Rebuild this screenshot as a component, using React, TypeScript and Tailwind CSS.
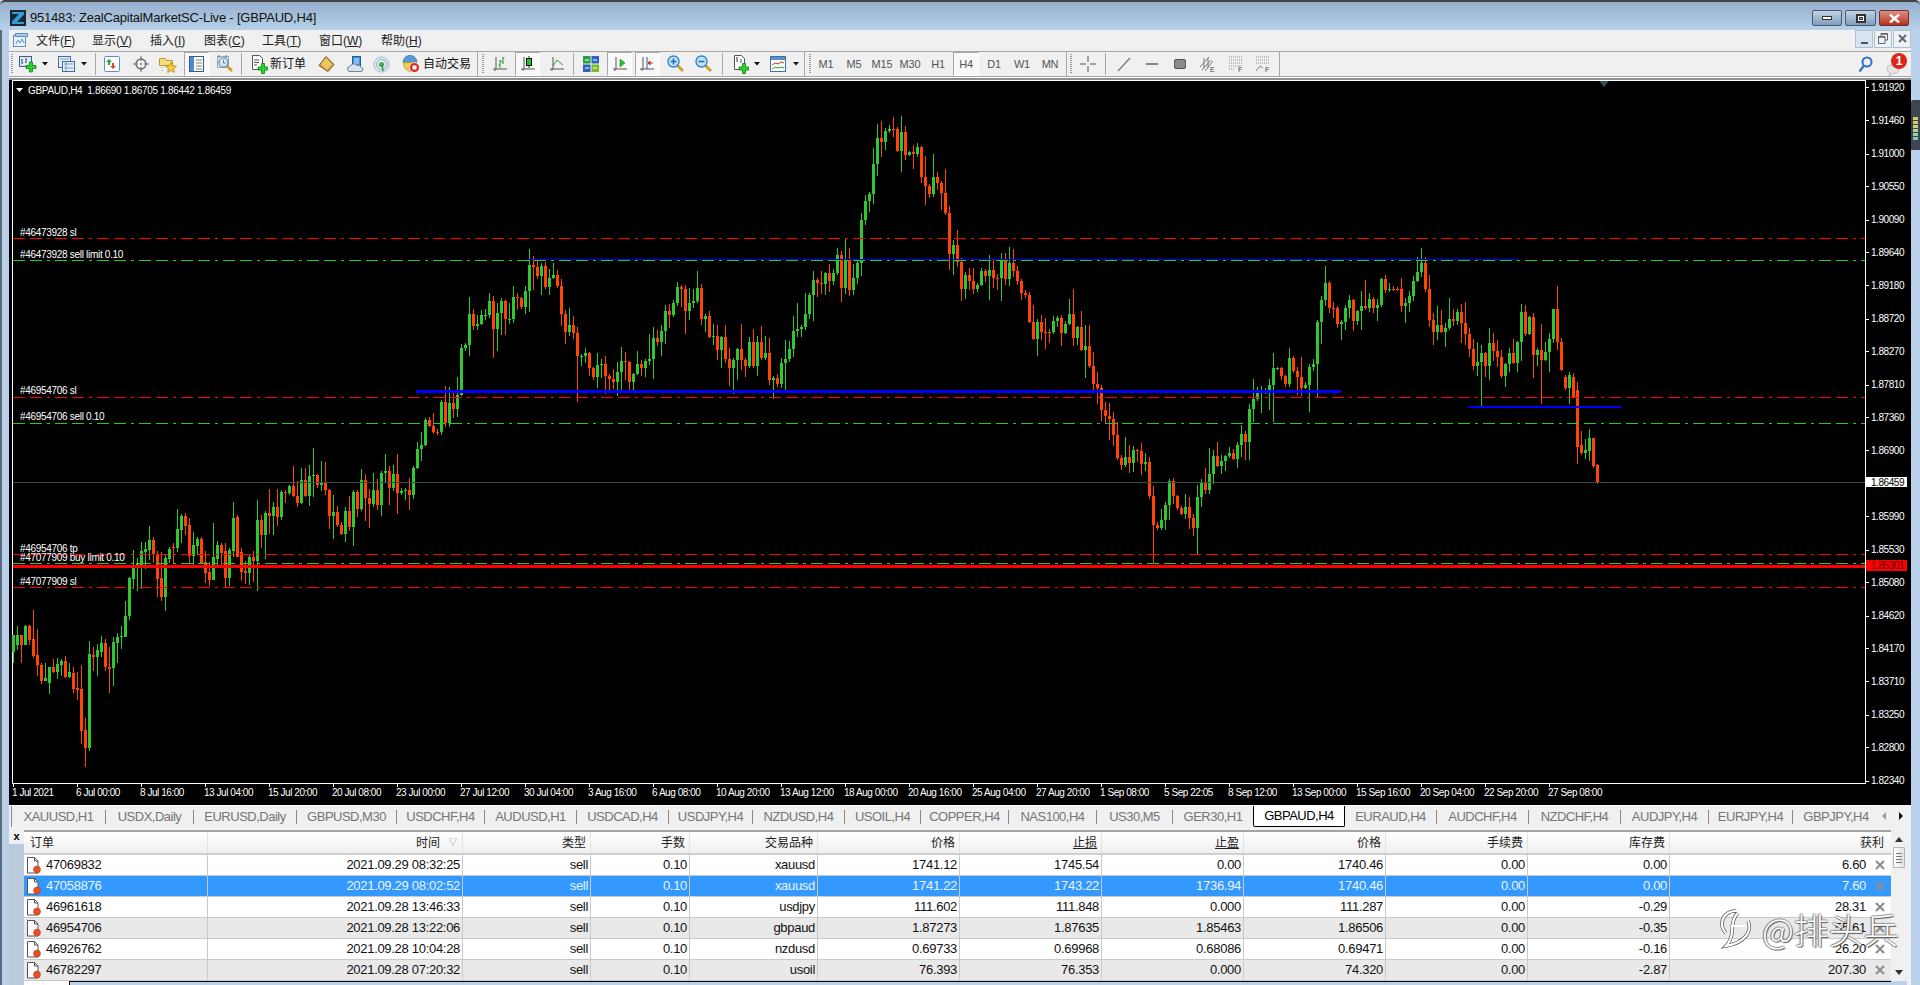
import React from 'react';

// real-pixel chart helpers
const priceY = (p: number) => 87 + (1.9192 - p) * 7241;

type C = [number, number, number, number, number];
// first candles, read off the picture: [green?, bodyTop, bodyBottom, wickTop, wickBottom] (3x, y offset 500)
const headRaw: C[] = [
  [1, 405, 455, 405, 490], [1, 405, 435, 378, 450], [0, 405, 435, 405, 488], [1, 378, 435, 375, 435], [0, 378, 420, 375, 435],
  [0, 418, 468, 330, 475], [0, 465, 495, 388, 528], [0, 495, 543, 490, 552], [1, 533, 543, 490, 543], [1, 502, 548, 500, 582],
  [0, 502, 516, 478, 518], [1, 492, 516, 475, 537], [1, 484, 495, 478, 528], [0, 484, 532, 468, 535], [1, 516, 530, 490, 535],
  [0, 520, 567, 502, 578], [0, 565, 570, 516, 600], [0, 567, 692, 495, 732], [0, 690, 744, 655, 800], [1, 462, 745, 424, 752],
  [0, 465, 470, 442, 513], [1, 450, 472, 432, 528], [1, 430, 455, 408, 470], [0, 428, 500, 418, 512], [0, 500, 506, 440, 578],
  [1, 426, 503, 410, 558], [1, 412, 428, 400, 488], [1, 408, 410, 378, 448], [1, 348, 410, 303, 412], [1, 233, 348, 230, 360],
  [1, 204, 236, 150, 268], [1, 190, 204, 175, 272], [1, 152, 198, 125, 266], [1, 148, 156, 126, 206], [1, 120, 150, 78, 180],
  [0, 120, 162, 112, 190], [0, 162, 237, 152, 290], [0, 234, 290, 155, 302], [1, 175, 291, 165, 332], [1, 146, 177, 140, 190],
  [0, 140, 143, 128, 190], [1, 87, 145, 27, 155], [1, 47, 90, 42, 130], [0, 47, 78, 38, 105], [0, 76, 167, 55, 190],
  [1, 136, 167, 95, 204], [1, 116, 138, 112, 165], [0, 116, 190, 112, 192], [0, 186, 220, 153, 250], [0, 216, 240, 185, 258],
  [1, 172, 240, 68, 240], [1, 135, 178, 122, 200], [0, 135, 160, 130, 205], [0, 152, 234, 130, 260], [1, 150, 234, 145, 258],
  [1, 54, 154, 6, 172], [0, 52, 170, 45, 172], [0, 156, 215, 145, 243], [0, 213, 218, 183, 252], [1, 172, 218, 165, 255],
  [0, 172, 182, 153, 245], [1, 60, 183, 0, 272],
];
const tailRaw: C[] = [
  [0, -10, 25, -15, 30], [1, -15, 25, -25, 72], [0, -8, 50, -20, 55], [0, 30, 200, 5, 252], [0, 195, 219, 153, 225],
  [1, 210, 219, 178, 237], [1, 174, 213, 148, 243], [0, 174, 258, 174, 264], [0, 255, 310, 252, 312],
];
// mid price path in the coordinates of a 1568 wide view
const path: [number, number][] = [
  [212, 425], [225, 420], [235, 405], [250, 395], [265, 405], [280, 425], [295, 405], [310, 400], [320, 395], [330, 400], [340, 380], [350, 345],
  [360, 340], [370, 335], [378, 280], [385, 262], [395, 245], [405, 260], [415, 255], [425, 255], [433, 215], [445, 225], [455, 240], [462, 270],
  [472, 290], [485, 300], [495, 305], [505, 300], [520, 300], [530, 280], [545, 255], [555, 245], [570, 245], [580, 265], [590, 285], [600, 295],
  [612, 285], [625, 300], [640, 305], [650, 275], [665, 235], [680, 220], [695, 225], [705, 180], [715, 125], [725, 115], [737, 110], [750, 135],
  [760, 150], [770, 170], [778, 210], [785, 240], [795, 225], [810, 230], [820, 220], [835, 235], [845, 270], [855, 285], [865, 260], [875, 260],
  [885, 290], [895, 320], [905, 350], [915, 375], [925, 375], [935, 365], [942, 425], [955, 405], [965, 420], [977, 420], [985, 385], [1000, 385],
  [1015, 360], [1025, 325], [1040, 310], [1055, 300], [1070, 310], [1080, 240], [1095, 255], [1110, 260], [1125, 240], [1140, 240], [1150, 245],
  [1160, 218], [1165, 240], [1175, 285], [1190, 250], [1200, 290], [1215, 290], [1230, 300], [1245, 260], [1258, 300], [1268, 260], [1278, 312],
];
const spikes: [number, number, number][] = [
  [735, 95, 0], [433, 203, 0], [942, 0, 461], [977, 0, 453], [1158, 210, 0], [1268, 252, 0], [470, 0, 328], [600, 0, 322], [495, 0, 322],
  [640, 0, 320], [515, 0, 320], [1040, 0, 345], [1075, 0, 325], [255, 366, 0], [1210, 0, 333], [1258, 0, 330],
];

function buildCandles() {
  let s = 12345;
  const rnd = () => {
    s = (s + 0x6d2b79f5) | 0;
    let t = Math.imul(s ^ (s >>> 15), 1 | s);
    t = (t + Math.imul(t ^ (t >>> 7), 61 | t)) ^ t;
    return ((t ^ (t >>> 14)) >>> 0) / 4294967296;
  };
  const out: { x: number; up: boolean; top: number; bot: number; hi: number; lo: number }[] = [];
  headRaw.forEach((c, i) => {
    const f = (v: number) => 500 + v / 3;
    out.push({ x: 13 + 4 * i, up: !!c[0], top: f(c[1]), bot: f(c[2]), hi: f(c[3]), lo: f(c[4]) });
  });
  let prev = out[out.length - 1].top;
  const target = (x: number) => {
    const v = x / 1.2245;
    for (let k = 0; k < path.length - 1; k++) {
      if (v >= path[k][0] && v <= path[k + 1][0]) {
        const r = (v - path[k][0]) / (path[k + 1][0] - path[k][0]);
        return (path[k][1] + (path[k + 1][1] - path[k][1]) * r) * 1.2245;
      }
    }
    return path[path.length - 1][1] * 1.2245;
  };
  for (let i = headRaw.length; i < 388; i++) {
    const x = 13 + 4 * i;
    const close = target(x) + (rnd() - 0.5) * 32;
    const top = Math.min(prev, close);
    const bot = Math.max(prev, close);
    out.push({
      x,
      up: close < prev,
      top,
      bot: Math.max(bot, top + 1),
      hi: top - rnd() * rnd() * 28 - 1,
      lo: bot + rnd() * rnd() * 28 + 1,
    });
    prev = close;
  }
  tailRaw.forEach((c, i) => {
    const f = (v: number) => 380 + v / 3;
    out.push({ x: 13 + 4 * (388 + i), up: !!c[0], top: f(c[1]), bot: f(c[2]), hi: f(c[3]), lo: f(c[4]) });
  });
  spikes.forEach(([v, hi, lo]) => {
    const i = Math.round((v * 1.2245 - 13) / 4);
    if (!out[i]) return;
    if (hi) out[i].hi = hi * 1.2245;
    if (lo) out[i].lo = lo * 1.2245;
  });
  return out;
}
const candles = buildCandles();

const axisPrices = [
  '1.91920', '1.91460', '1.91000', '1.90550', '1.90090', '1.89640', '1.89180', '1.88720', '1.88270', '1.87810', '1.87360',
  '1.86900', '1.85990', '1.85530', '1.85080', '1.84620', '1.84170', '1.83710', '1.83250', '1.82800', '1.82340',
];
const axisDates = [
  '1 Jul 2021', '6 Jul 00:00', '8 Jul 16:00', '13 Jul 04:00', '15 Jul 20:00', '20 Jul 08:00', '23 Jul 00:00', '27 Jul 12:00', '30 Jul 04:00',
  '3 Aug 16:00', '6 Aug 08:00', '10 Aug 20:00', '13 Aug 12:00', '18 Aug 00:00', '20 Aug 16:00', '25 Aug 04:00', '27 Aug 20:00', '1 Sep 08:00',
  '5 Sep 22:05', '8 Sep 12:00', '13 Sep 00:00', '15 Sep 16:00', '20 Sep 04:00', '22 Sep 20:00', '27 Sep 08:00',
];
const levelLines = [
  { y: 238, color: '#ff0000' },
  { y: 260, color: '#22cc22' },
  { y: 397, color: '#ff0000' },
  { y: 423, color: '#22cc22' },
  { y: 554, color: '#ff0000' },
  { y: 563, color: '#22cc22' },
  { y: 587, color: '#ff0000' },
];
const orderLabels = [
  { y: 236, t: '#46473928 sl' },
  { y: 258, t: '#46473928 sell limit 0.10' },
  { y: 394, t: '#46954706 sl' },
  { y: 420, t: '#46954706 sell 0.10' },
  { y: 552, t: '#46954706 tp' },
  { y: 561, t: '#47077909 buy limit 0.10' },
  { y: 585, t: '#47077909 sl' },
];

const Chart = () => (
  <svg viewBox="9 80 1902 725" width={1902} height={725} className="block bg-black">
    <rect x={12.5} y={80.5} width={1853} height={703} fill="none" stroke="#fff" />
    <g shapeRendering="crispEdges">
      {candles.map((c) => (
        <g key={c.x} fill={c.up ? '#2fc92f' : '#ff4500'}>
          <rect x={c.x} y={c.hi} width={1} height={Math.max(c.lo - c.hi, 1)} />
          <rect x={c.x - 1} y={c.top} width={3} height={Math.max(c.bot - c.top, 1)} />
        </g>
      ))}
      <rect x={13} y={482} width={1852} height={1} fill="#2f4f4f" />
      {levelLines.map((l) => (
        <line key={l.y} x1={13} x2={1865} y1={l.y + 0.5} y2={l.y + 0.5} stroke={l.color} strokeDasharray="12 5 12 5 3 5" />
      ))}
      <rect x={527} y={259} width={991} height={1} fill="#0000ff" />
      <rect x={416} y={390} width={925} height={3} fill="#0000ff" />
      <rect x={1469} y={406} width={152} height={2} fill="#0000ff" />
      <rect x={13} y={565} width={1852} height={3} fill="#ff0000" />
      {axisPrices.map((p) => (
        <rect key={p} x={1865} y={Math.round(priceY(parseFloat(p)))} width={4} height={1} fill="#fff" />
      ))}
      {axisDates.map((d, i) => (
        <rect key={d} x={13 + 64 * i} y={783} width={1} height={4} fill="#fff" />
      ))}
    </g>
    <polygon points="1599,81 1609,81 1604,87" fill="#2f4f4f" />
    <polygon points="16,88 23,88 19.5,92" fill="#fff" />
    <g fill="#fff" fontSize={10} letterSpacing={-0.3}>
      <text x={28} y={94}>GBPAUD,H4&#160;&#160;1.86690 1.86705 1.86442 1.86459</text>
      {orderLabels.map((l) => (
        <text key={l.t} x={20} y={l.y}>{l.t}</text>
      ))}
    </g>
    <g fill="#fff" fontSize={10} letterSpacing={-0.45}>
      {axisPrices.map((p) => (
        <text key={p} x={1871} y={priceY(parseFloat(p)) + 3.5}>{p}</text>
      ))}
      {axisDates.map((d, i) => (
        <text key={d} x={12 + 64 * i} y={796}>{d}</text>
      ))}
    </g>
    <rect x={1866} y={477} width={41} height={10} fill="#fff" />
    <text x={1871} y={486} fontSize={10} letterSpacing={-0.45} fill="#000">1.86459</text>
    <rect x={1866} y={560} width={41} height={11} fill="#ff0000" />
    <text x={1871} y={569} fontSize={10} letterSpacing={-0.45} fill="#5a0000">1.85301</text>
  </svg>
);

/* ---------- toolbar icons ---------- */
const Plus = ({ x, y }: { x: number; y: number }) => (
  <path
    transform={`translate(${x} ${y})`}
    d="M3.5 0h3v3.5H10v3H6.5V10h-3V6.5H0v-3h3.5z"
    fill="#2bd32b"
    stroke="#0c7d1a"
    strokeWidth="0.8"
  />
);
const Axes = () => (
  <path d="M3 1v12M0 13h14M2 13v2" stroke="#555" strokeWidth="1" fill="none" />
);
const Svg = ({ w, h, cls, children }: { w: number; h: number; cls: string; children: React.ReactNode }) => (
  <svg width={w} height={h} viewBox={`0 0 ${w} ${h}`} className={`block shrink-0 ${cls}`}>
    {children}
  </svg>
);
const Arrow = ({ cls }: { cls: string }) => (
  <svg width={6} height={4} viewBox="0 0 6 4" className={`block shrink-0 ${cls}`}>
    <path d="M0 0h6L3 3.5z" fill="#111" />
  </svg>
);
const Sep = ({ cls }: { cls: string }) => <div className={`h-[22px] w-px shrink-0 bg-[#a8a8a8] ${cls}`} />;
const Grip = ({ cls }: { cls: string }) => (
  <div className={`h-[20px] w-[2px] shrink-0 border-y-0 bg-[repeating-linear-gradient(to_bottom,#9a9a9a_0,#9a9a9a_1px,transparent_1px,transparent_2px)] ${cls}`} />
);
const Pressed = ({ cls, children }: { cls: string; children: React.ReactNode }) => (
  <div className={`flex h-[24px] w-[25px] shrink-0 items-center justify-center border border-t-[#a9a9a9] border-l-[#a9a9a9] border-r-white border-b-white bg-[#f8f8f8] ${cls}`}>
    {children}
  </div>
);
const Zoom = ({ cls, plus }: { cls: string; plus: boolean }) => (
  <Svg w={17} h={18} cls={cls}>
    <path d="M10 10l6 6" stroke="#c9a227" strokeWidth="3" />
    <circle cx="6.5" cy="6.5" r="5.5" fill="#bfe3fb" stroke="#2f86c9" strokeWidth="1.4" />
    <path d={plus ? 'M3.5 6.5h6M6.5 3.5v6' : 'M3.5 6.5h6'} stroke="#2a6fb0" strokeWidth="1.6" />
  </Svg>
);
const Doc = () => (
  <path d="M1.5.5h7l3 3v11h-10z" fill="#fff" stroke="#555" />
);

const Toolbar = () => (
  <div className="flex h-[26px] items-center border-y border-[#a6a6a6] bg-[#f0f0f0] pl-[2px]">
    <Grip cls="" />
    <Svg w={18} h={17} cls="ml-[6px]">
      <rect x=".5" y=".5" width="12" height="10" fill="#dfe9f7" stroke="#3d5f85" />
      <path d="M3 3v5M2 4h1M3 7h1M7 2v5M6 6h1M7 3h1" stroke="#3d5f85" />
      <Plus x={7} y={6} />
    </Svg>
    <Arrow cls="ml-[5px]" />
    <Svg w={17} h={17} cls="ml-[10px]">
      <rect x=".5" y=".5" width="12" height="11" fill="#e4edf9" stroke="#3d6ea5" />
      <rect x="4.5" y="5.5" width="12" height="10" fill="#e4edf9" stroke="#3d6ea5" />
      <path d="M2 3h9M6 8h9M6 12h9M8 6v9" stroke="#7e9cc0" />
    </Svg>
    <Arrow cls="ml-[6px]" />
    <Sep cls="ml-[8px]" />
    <Svg w={16} h={16} cls="ml-[8px]">
      <rect x=".5" y=".5" width="15" height="15" rx="1" fill="#fff" stroke="#5f8fc4" />
      <path d="M5 3l3 3H6v3H4V6H2z" fill="#22b033" />
      <path d="M9 13l-3-3h2V7h2v3h2z" fill="#e2472a" />
    </Svg>
    <Svg w={16} h={16} cls="ml-[13px]">
      <circle cx="8" cy="8" r="5" fill="none" stroke="#6b6b6b" strokeWidth="1.4" />
      <path d="M8 0v5M8 11v5M0 8h5M11 8h5" stroke="#6b6b6b" />
      <circle cx="8" cy="8" r="1" fill="#777" />
    </Svg>
    <Svg w={18} h={17} cls="ml-[10px]">
      <path d="M.5 2.5h6l1 2h6v5h-13z" fill="#f6dd7c" stroke="#b79a3a" />
      <path d="M12 6l1.7 3.6 3.8.5-2.8 2.6.7 3.8-3.4-1.9-3.4 1.9.7-3.8-2.8-2.6 3.8-.5z" fill="#f2c73a" stroke="#a88518" strokeWidth=".7" />
      <path d="M3 11v1M3 14v1" stroke="#888" />
    </Svg>
    <Pressed cls="ml-[7px]">
      <Svg w={15} h={16} cls="">
        <rect x=".5" y=".5" width="14" height="15" fill="#fff" stroke="#2a5d96" />
        <rect x="1" y="1" width="4" height="14" fill="#4d8fd6" />
        <path d="M7 4h6M7 7h6M7 10h6M7 13h6" stroke="#7a7a7a" />
      </Svg>
    </Pressed>
    <Svg w={18} h={18} cls="ml-[7px]">
      <rect x="1.5" y="1.5" width="11" height="11" fill="#e9edf2" stroke="#9aa3ad" />
      <path d="M3 0v3M10 0v3" stroke="#777" />
      <path d="M10 10l6 6" stroke="#c9a227" strokeWidth="2.6" />
      <circle cx="7.5" cy="7.5" r="4.5" fill="#d5e8f8" stroke="#5b86ad" strokeWidth="1.2" />
      <path d="M7.5 5v3h2" stroke="#777" fill="none" />
    </Svg>
    <Sep cls="ml-[7px]" />
    <Svg w={17} h={19} cls="ml-[9px]">
      <Doc />
      <path d="M3 5h5M3 7.5h5M3 10h3" stroke="#555" />
      <Plus x={7} y={8.5} />
    </Svg>
    <span className="ml-[2px] w-[36px] shrink-0 text-[12px] text-[#111]">新订单</span>
    <Svg w={17} h={16} cls="ml-[12px]">
      <path d="M8 .5l8 8-6 7-9-6z" fill="#d6a33c" stroke="#7a5a1c" />
      <path d="M8 2l6 6.5-5 5.5-6-6z" fill="#edc56b" />
    </Svg>
    <Svg w={17} h={17} cls="ml-[12px]">
      <rect x="5.5" y=".5" width="8" height="10" fill="#3d8edb" stroke="#1e5fa0" />
      <path d="M7 3h5M7 5h5M7 7h5" stroke="#d8ecff" />
      <path d="M3 15.5a2.5 2.5 0 0 1 0-5 4 4 0 0 1 7-1 3 3 0 0 1 4 2 2 2 0 0 1 0 4z" fill="#d6e2ee" stroke="#6d8499" />
    </Svg>
    <Svg w={17} h={17} cls="ml-[9px]">
      <circle cx="8.5" cy="8.5" r="7.5" fill="#e2ecf4" stroke="#9fb6c9" />
      <circle cx="8.5" cy="8.5" r="5" fill="none" stroke="#8fa9bb" />
      <circle cx="8.5" cy="8.5" r="2.6" fill="#45b14b" />
      <path d="M9 9l1 6" stroke="#3a9440" strokeWidth="1.5" />
    </Svg>
    <Svg w={19} h={18} cls="ml-[11px]">
      <path d="M2 6.5C3 2 6 .5 9 .5s6 1.5 7 6c-3 1.5-11 1.5-14 0z" fill="#5a9bd5" stroke="#2c6aa0" strokeWidth=".7" />
      <path d="M2 7.5h14l-2 6-5 3.5-5-3.5z" fill="#f3cd57" stroke="#b08c25" strokeWidth=".7" />
      <circle cx="13.5" cy="12.5" r="5" fill="#d92a1c" stroke="#fff" strokeWidth=".8" />
      <rect x="11.5" y="10.5" width="4" height="4" fill="#fff" />
    </Svg>
    <span className="ml-[3px] w-[48px] shrink-0 whitespace-nowrap text-[12px] text-[#111]">自动交易</span>
    <Sep cls="ml-[6px] h-[26px]" />
    <Grip cls="ml-[4px]" />
    <Svg w={14} h={16} cls="ml-[9px]">
      <Axes />
      <path d="M7 4v8M5.5 9H7M7 5h1.5M10 1v7M8.5 6H10M10 2h1.5" stroke="#1e9a2a" />
    </Svg>
    <Pressed cls="ml-[8px]">
      <Svg w={14} h={16} cls="">
        <Axes />
        <path d="M8 0v12" stroke="#333" />
        <rect x="5.5" y="2.5" width="5" height="7" fill="#26c22d" stroke="#111" />
      </Svg>
    </Pressed>
    <Svg w={14} h={16} cls="ml-[10px]">
      <Axes />
      <path d="M3 10l4-6 6 5" stroke="#2e9e3a" fill="none" />
    </Svg>
    <Sep cls="ml-[9px]" />
    <Svg w={16} h={16} cls="ml-[9px]">
      <rect width="8" height="8" fill="#2e9e44" />
      <rect x="8" width="8" height="8" fill="#2d62c4" />
      <rect y="8" width="8" height="8" fill="#2d62c4" />
      <rect x="8" y="8" width="8" height="8" fill="#7cb82f" />
      <path d="M2 3.5h4v1H2zM10 3.5h4v1h-4zM2 11.5h4v1H2zM10 11.5h4v1h-4z" fill="#fff" />
      <path d="M0 8h16M8 0v16" stroke="#e8f0e8" />
    </Svg>
    <Pressed cls="ml-[8px]">
      <Svg w={14} h={16} cls="">
        <Axes />
        <path d="M7 3l5 4-5 4z" fill="#22c42a" stroke="#0d8a18" strokeWidth=".6" />
      </Svg>
    </Pressed>
    <Pressed cls="ml-[3px]">
      <Svg w={15} h={16} cls="">
        <Axes />
        <path d="M7 1v12" stroke="#2a5fa8" />
        <path d="M13 7H10V5L8 7l2 2V7" fill="#c8321c" stroke="#c8321c" />
      </Svg>
    </Pressed>
    <Zoom cls="ml-[7px]" plus />
    <Zoom cls="ml-[11px]" plus={false} />
    <Sep cls="ml-[10px]" />
    <Svg w={16} h={19} cls="ml-[10px]">
      <Doc />
      <path d="M4 2v5M3 3h1M4 6h1M8 4v4" stroke="#555" />
      <Plus x={6} y={8.5} />
    </Svg>
    <Arrow cls="ml-[5px]" />
    <Svg w={16} h={16} cls="ml-[10px]">
      <rect x=".5" y=".5" width="15" height="15" fill="#fff" stroke="#3f6fa6" />
      <rect x="1" y="1" width="14" height="3" fill="#5b8fc9" />
      <path d="M2 9l3-2 3 1 3-2 3 1" stroke="#c8321c" fill="none" />
      <path d="M2 13l3-2 3 1 3-1 3 1" stroke="#2f9e3a" fill="none" />
    </Svg>
    <Arrow cls="ml-[7px]" />
    <Sep cls="ml-[5px] h-[26px]" />
    <Grip cls="ml-[4px]" />
    <div className="ml-px grid shrink-0 grid-cols-[repeat(9,28px)] items-center text-center text-[11px] tracking-[-0.2px] text-[#555]">
      {['M1', 'M5', 'M15', 'M30', 'H1'].map((t) => (
        <span key={t}>{t}</span>
      ))}
      <span className="mx-auto flex h-[24px] w-[26px] items-center justify-center border border-t-[#a9a9a9] border-l-[#a9a9a9] border-r-white border-b-white bg-[#f8f8f8]">H4</span>
      {['D1', 'W1', 'MN'].map((t) => (
        <span key={t}>{t}</span>
      ))}
    </div>
    <Sep cls="ml-[2px] h-[26px]" />
    <Grip cls="ml-[3px]" />
    <Svg w={16} h={16} cls="ml-[8px]">
      <path d="M8 0v6M8 10v6M0 8h6M10 8h6" stroke="#555" />
    </Svg>
    <Sep cls="ml-[9px]" />
    <Svg w={16} h={16} cls="ml-[10px]">
      <path d="M2 15L14 2" stroke="#777" strokeWidth="1.2" />
    </Svg>
    <Svg w={16} h={16} cls="ml-[12px]">
      <path d="M2 8h12" stroke="#555" strokeWidth="1.4" />
    </Svg>
    <Svg w={16} h={16} cls="ml-[12px]">
      <rect x="2.5" y="3.5" width="11" height="9" rx="1.5" fill="#8c8c8c" stroke="#555" />
    </Svg>
    <Svg w={17} h={18} cls="ml-[11px]">
      <path d="M1 12L10 2M3 15l9-10M6 16l8-10M5 3v10M9 3v10" stroke="#777" />
      <text x={11} y={17} fontSize={7} fill="#444">E</text>
    </Svg>
    <Svg w={16} h={18} cls="ml-[12px]">
      <path d="M1 2h13M1 5h13M1 8h13M1 11h13M1 14h6" stroke="#888" strokeDasharray="1 1" />
      <text x={10} y={17} fontSize={7} fill="#444">F</text>
    </Svg>
    <Svg w={16} h={18} cls="ml-[11px]">
      <path d="M1 2h14M1 5h14M1 8h14" stroke="#888" strokeDasharray="1 1" />
      <path d="M1 16l4-5 3 2" stroke="#888" fill="none" />
      <text x={10} y={17} fontSize={7} fill="#444">F</text>
    </Svg>
    <Sep cls="ml-[8px] h-[26px]" />
    <Svg w={15} h={17} cls="ml-auto">
      <circle cx="9" cy="6" r="4.5" fill="none" stroke="#2f6fd0" strokeWidth="2" />
      <path d="M6 9.5L1.5 15.5" stroke="#2f6fd0" strokeWidth="2.2" />
    </Svg>
    <div className="relative ml-[13px] mr-[4px] h-[24px] w-[21px] shrink-0">
      <svg width={14} height={12} viewBox="0 0 14 12" className="absolute left-0 bottom-0">
        <ellipse cx="7" cy="5" rx="6" ry="4.5" fill="#e6e6e6" stroke="#bcbcbc" />
        <path d="M4 9l-1 3 4-3" fill="#e6e6e6" stroke="#bcbcbc" />
      </svg>
      <span className="absolute right-0 top-[1px] flex h-[16px] w-[16px] items-center justify-center rounded-full bg-[#d9281a] text-[12px] font-bold leading-none text-white">1</span>
    </div>
  </div>
);

const tabs = [
  'XAUUSD,H1', 'USDX,Daily', 'EURUSD,Daily', 'GBPUSD,M30', 'USDCHF,H4', 'AUDUSD,H1', 'USDCAD,H4', 'USDJPY,H4', 'NZDUSD,H4', 'USOIL,H4', 'COPPER,H4',
  'NAS100,H4', 'US30,M5', 'GER30,H1', 'GBPAUD,H4', 'EURAUD,H4', 'AUDCHF,H4', 'NZDCHF,H4', 'AUDJPY,H4', 'EURJPY,H4', 'GBPJPY,H4',
];

const TabBar = () => (
  <div className="flex h-[25px] bg-[#f0f0f0]">
    <div className="grid h-[21px] grid-cols-[3px_94px_88px_103px_100px_88px_92px_92px_84px_92px_76px_88px_88px_76px_80px_92px_92px_92px_92px_88px_84px_86px] items-center border-t border-white text-[13px] tracking-[-0.5px] text-[#757575]">
      <span className="h-full border-r border-[#8a8a8a]" />
      {tabs.map((t) =>
        t === 'GBPAUD,H4' ? (
          <span key={t} className="flex h-[21px] items-center justify-center rounded-b-[2px] border border-t-0 border-black bg-white text-black">
            {t}
          </span>
        ) : (
          <span key={t} className="flex h-[14px] items-center justify-center border-r border-[#8a8a8a] [&:nth-last-child(1)]:border-r-0 [&:nth-child(15)]:border-r-0">
            {t}
          </span>
        ),
      )}
    </div>
    <div className="ml-auto flex h-[21px] items-center gap-[13px] pr-[8px] text-[#222]">
      <svg width={4} height={8} viewBox="0 0 4 8"><path d="M4 0v8L0 4z" fill="#999" /></svg>
      <svg width={4} height={8} viewBox="0 0 4 8"><path d="M0 0v8l4-4z" fill="#111" /></svg>
    </div>
  </div>
);

const colGrid = 'grid grid-cols-[184px_255px_128px_99px_128px_142px_142px_142px_142px_142px_142px_221px]';
const headers = ['时间', '类型', '手数', '交易品种', '价格', '止损', '止盈', '价格', '手续费', '库存费'];
const rows = [
  ['47069832', '2021.09.29 08:32:25', 'sell', '0.10', 'xauusd', '1741.12', '1745.54', '0.00', '1740.46', '0.00', '0.00', '6.60'],
  ['47058876', '2021.09.29 08:02:52', 'sell', '0.10', 'xauusd', '1741.22', '1743.22', '1736.94', '1740.46', '0.00', '0.00', '7.60'],
  ['46961618', '2021.09.28 13:46:33', 'sell', '0.10', 'usdjpy', '111.602', '111.848', '0.000', '111.287', '0.00', '-0.29', '28.31'],
  ['46954706', '2021.09.28 13:22:06', 'sell', '0.10', 'gbpaud', '1.87273', '1.87635', '1.85463', '1.86506', '0.00', '-0.35', '55.61'],
  ['46926762', '2021.09.28 10:04:28', 'sell', '0.10', 'nzdusd', '0.69733', '0.69968', '0.68086', '0.69471', '0.00', '-0.16', '26.20'],
  ['46782297', '2021.09.28 07:20:32', 'sell', '0.10', 'usoil', '76.393', '76.353', '0.000', '74.320', '0.00', '-2.87', '207.30'],
];

const OrderIcon = () => (
  <svg width={14} height={17} viewBox="0 0 14 17" className="ml-[3px] block shrink-0">
    <path d="M.5.5h7l3.5 3.5V16H.5z" fill="#fff" stroke="#555" />
    <path d="M7.5.5V4H11" fill="none" stroke="#555" />
    <circle cx="10" cy="12.5" r="3.5" fill="#e8501e" stroke="#a33" strokeWidth=".5" />
  </svg>
);

const Terminal = () => (
  <div className="flex h-[155px]">
    <div className="flex w-[15px] shrink-0 flex-col bg-[#bccbdb]">
      <div className="flex h-[14px] items-center justify-center bg-[#f0f0f0] pb-[1px] text-[11px] font-bold leading-none text-black">x</div>
    </div>
    <div className="w-[1867px] shrink-0">
      <div className={`${colGrid} h-[25px] border-t-2 border-b-2 border-t-[#a3a3a3] border-b-[#cfcfcf] bg-gradient-to-b from-white to-[#efefef] text-[12px] text-[#222]`}>
        <div className="flex items-center border-r border-[#e4e4e4] pl-[6px]">订单</div>
        {headers.map((h, i) => (
          <div key={i} className="flex items-center justify-end border-r border-[#e4e4e4] pr-[4px]">
            <span className={h === '止损' || h === '止盈' ? 'underline' : ''}>{h}</span>
            {i === 0 && <span className="ml-[9px] mr-[1px] text-[8px] text-[#888]">▽</span>}
          </div>
        ))}
        <div className="flex items-center justify-end pr-[7px]">获利</div>
      </div>
      {rows.map((r, ri) => (
        <div
          key={r[0]}
          className={`${colGrid} h-[21px] border-b border-[#c9c9c9] text-[13px] tracking-[-0.3px] ${
            ri === 1 ? 'bg-[#3399ff] text-[#eaf4ff]' : ri === 3 || ri === 5 ? 'bg-[#e9e9e9] text-[#111]' : 'bg-white text-[#111]'
          }`}
        >
          {r.map((c, ci) =>
            ci === 0 ? (
              <div key={ci} className="flex items-center gap-[5px] border-r border-[#c9c9c9]">
                <OrderIcon />
                <span>{c}</span>
              </div>
            ) : ci === 11 ? (
              <div key={ci} className="flex items-center justify-end">
                <span>{c}</span>
                <svg width={10} height={10} viewBox="0 0 10 10" className="ml-[9px] mr-[6px]">
                  <path d="M1 1l8 8M9 1L1 9" stroke="#8e8e8e" strokeWidth="2.2" />
                </svg>
              </div>
            ) : (
              <div key={ci} className="flex items-center justify-end border-r border-[#c9c9c9] pr-[2px]">
                {c}
              </div>
            ),
          )}
        </div>
      ))}
      <div className="flex h-[4px] border-t border-black">
        <div className="-mt-px w-[46px] border-r border-black bg-white" />
      </div>
    </div>
    <div className="flex h-[151px] w-[16px] shrink-0 flex-col items-center bg-[#f0f0f0]">
      <svg width={8} height={5} viewBox="0 0 8 5" className="mt-[7px]"><path d="M0 5h8L4 0z" fill="#333" /></svg>
      <div className="mt-[5px] flex h-[21px] w-[12px] flex-col items-center justify-center gap-[2px] rounded-[1px] border border-[#b5b5b5] bg-gradient-to-r from-white to-[#e2e2e2]">
        <span className="h-px w-[6px] bg-[#777]" />
        <span className="h-px w-[6px] bg-[#777]" />
        <span className="h-px w-[6px] bg-[#777]" />
        <span className="h-px w-[6px] bg-[#777]" />
      </div>
      <svg width={8} height={5} viewBox="0 0 8 5" className="mt-auto mb-[6px]"><path d="M0 0h8L4 5z" fill="#333" /></svg>
    </div>
    <div className="flex-1 bg-[#f0f0f0]" />
  </div>
);

const menus: [string, string][] = [
  ['文件', 'F'], ['显示', 'V'], ['插入', 'I'], ['图表', 'C'], ['工具', 'T'], ['窗口', 'W'], ['帮助', 'H'],
];

export default function App() {
  return (
    <div className="relative flex h-[985px] w-[1920px] flex-col overflow-hidden bg-[#b9d1ea] font-['Liberation_Sans','Noto_Sans_CJK_SC',sans-serif]">
      {/* title bar */}
      <div className="flex h-[30px] shrink-0 items-start rounded-t-[5px] border-t-2 border-t-[#444] bg-gradient-to-b from-[#95afcd] to-[#b8d1e9] pl-[10px]">
        <svg width={16} height={16} viewBox="0 0 16 16" className="mt-[8px] block shrink-0">
          <rect width="16" height="16" fill="#1d2530" />
          <path d="M2 2h12v2.5L7 12h7v2H2v-2.5L9 4H2z" fill="#2f9fdc" />
        </svg>
        <span className="ml-[4px] mt-[7px] text-[13px] leading-[18px] tracking-[-0.2px] text-[#111]">951483: ZealCapitalMarketSC-Live - [GBPAUD,H4]</span>
        <div className="ml-auto mr-[11px] mt-[8px] flex gap-[3px]">
          <div className="flex h-[16px] w-[30px] items-center justify-center rounded-[2px] border border-[#47596e] bg-gradient-to-b from-[#c3d4e6] to-[#7f9cbc]">
            <span className="h-[4px] w-[10px] border border-[#333] bg-white" />
          </div>
          <div className="flex h-[16px] w-[31px] items-center justify-center rounded-[2px] border border-[#47596e] bg-gradient-to-b from-[#c3d4e6] to-[#7f9cbc]">
            <span className="flex h-[9px] w-[10px] items-center justify-center border-2 border-[#333] bg-white"><span className="h-[3px] w-[4px] border border-[#333] bg-[#a9bdd2]" /></span>
          </div>
          <div className="flex h-[16px] w-[30px] items-center justify-center rounded-[2px] border border-[#6e3030] bg-gradient-to-b from-[#dd8f82] to-[#b52a1a]">
            <svg width={11} height={9} viewBox="0 0 11 9"><path d="M1 .5l9 8M10 .5l-9 8" stroke="#fff" strokeWidth="2.4" /></svg>
          </div>
        </div>
      </div>

      <div className="flex min-h-0 flex-1">
        {/* left window frame */}
        <div className="w-[9px] shrink-0 border-l-2 border-l-[#5b6a7a] bg-[#b9d1ea]" />

        <div className="w-[1902px] shrink-0">
          {/* menu */}
          <div className="relative flex h-[21px] items-center bg-[#f0f0f0] text-[12px] text-[#222]">
            <svg width={15} height={15} viewBox="0 0 15 15" className="ml-[4px] block shrink-0">
              <rect x=".5" y="2.5" width="12" height="11" fill="#e7f0fb" stroke="#5c8fc7" />
              <rect x="2.5" y=".5" width="12" height="3" fill="#a9c8ea" stroke="#5c8fc7" />
              <path d="M3 11l2-4 2 3 2-4 2 4" fill="none" stroke="#5c8fc7" />
            </svg>
            <div className="ml-[8px] grid grid-cols-[56px_58px_54px_58px_57px_62px_56px]">
              {menus.map(([t, k]) => (
                <span key={k}>
                  {t}(<span className="underline">{k}</span>)
                </span>
              ))}
            </div>
            <div className="ml-auto flex h-[17px] items-center gap-[1px] self-start">
              <span className="flex h-[18px] w-[18px] items-end justify-center border border-[#b0bfcf] bg-[#d7e4f2] pb-[3px]"><span className="h-[2px] w-[7px] bg-[#555]" /></span>
              <span className="flex h-[18px] w-[18px] items-center justify-center border border-[#b0bfcf] bg-[#edf2f8]">
                <svg width={10} height={11} viewBox="0 0 10 11"><path d="M3 3V.5h6.5V7H7M.5 3.5H7V10.5H.5z" fill="none" stroke="#666" /><path d="M.5 4H7M3 1h6.5" stroke="#666" strokeWidth="1.4" /></svg>
              </span>
              <span className="flex h-[18px] w-[18px] items-center justify-center border border-[#b0bfcf] bg-[#edf2f8]">
                <svg width={9} height={9} viewBox="0 0 9 9"><path d="M1 1l7 7M8 1L1 8" stroke="#666" strokeWidth="2" /></svg>
              </span>
            </div>
          </div>
          <Toolbar />
          <div className="h-[3px] border-t border-white bg-[#8f8f8f]" />
          <Chart />
          <TabBar />
          <Terminal />
        </div>

        {/* right window frame */}
        <div className="flex-1 bg-[#b9d1ea]" />
      </div>

      {/* floating widget on the right edge */}
      <div className="absolute right-0 top-[100px] flex h-[50px] w-[9px] flex-col gap-[1px] rounded-tl-[2px] bg-[#3d4650] px-[2px] pt-[17px]">
        <span className="h-[3px] bg-[#d9c56a]" />
        <span className="h-[3px] bg-[#d9c56a]" />
        <span className="h-[3px] bg-[#d3d07a]" />
        <span className="h-[3px] bg-[#b7d488]" />
        <span className="h-[3px] bg-[#8fd3a2]" />
        <span className="h-[3px] bg-[#7ad1b2]" />
      </div>

      {/* watermark */}
      <div className="absolute left-[1719px] top-[907px] flex items-center font-['Noto_Sans_CJK_SC',sans-serif] text-[35px] font-light leading-[44px] text-white [text-shadow:1px_1px_1px_#555,-1px_0_1px_#777,0_-1px_1px_#999]">
        <svg width={34} height={40} viewBox="0 0 34 40" className="mr-[9px] block shrink-0">
          <path d="M17 2C8 2 3 8 3 15c0 4 2 7 4 9M19 4c-4 3-6 10-6 20-1 6-3 10-6 13 6-1 15-4 20-10 4-5 4-11 2-15" fill="none" stroke="#555" strokeWidth="3.6" />
          <path d="M17 2C8 2 3 8 3 15c0 4 2 7 4 9M19 4c-4 3-6 10-6 20-1 6-3 10-6 13 6-1 15-4 20-10 4-5 4-11 2-15M12 17h15" fill="none" stroke="#fff" strokeWidth="2.2" />
        </svg>
        <span>@排头兵</span>
      </div>
    </div>
  );
}
